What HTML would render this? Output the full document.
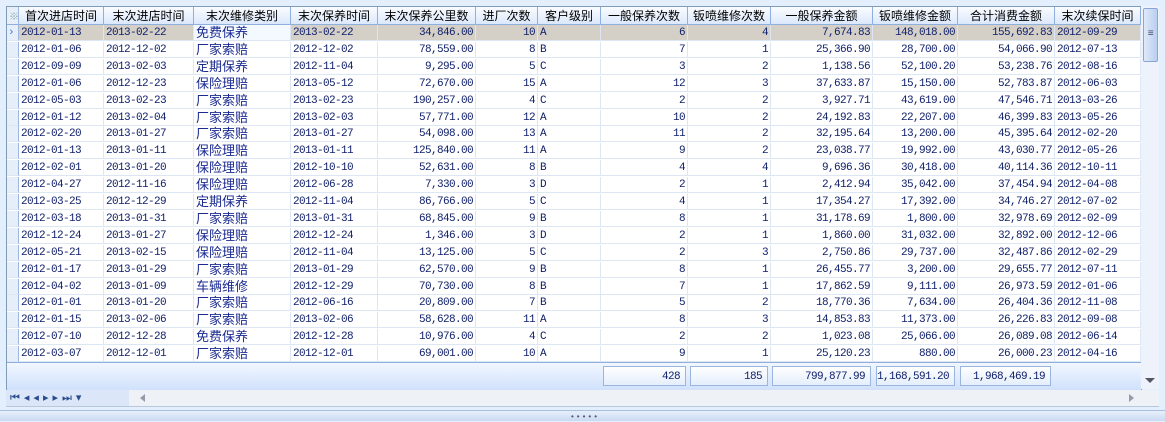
<!DOCTYPE html><html><head><meta charset="utf-8"><style>
body{margin:0;width:1165px;height:420px;background:#e3effc;position:relative;overflow:hidden;font-family:"Liberation Mono","Noto Sans CJK SC",monospace;font-size:11px;letter-spacing:-0.6px;color:#10206a}
#g{position:absolute;left:6px;top:6px;width:1134px;height:383px;background:#fff;border:1px solid #7f9db9;overflow:hidden}
.r{position:absolute;left:0;height:17px;width:1134px}
.c{position:absolute;top:0;height:16px;line-height:17px;border-right:1px solid #dde6f3;border-bottom:1px solid #dde6f3;white-space:nowrap;overflow:hidden;box-sizing:border-box;padding:0 2px}
.h .c{background:linear-gradient(#fafcff,#dbe8fb);border-right:1px solid #8fb0dc;border-bottom:1px solid #8fb0dc;color:#000;text-align:center;font-family:"Liberation Sans","Noto Sans CJK SC",sans-serif;font-size:12px;letter-spacing:0;height:18px;line-height:18px}
.ind{background:#e6eefa!important;border-right:1px solid #9db8e0!important}
.cj{font-family:"Liberation Sans","Noto Sans CJK SC",sans-serif;font-size:13px;letter-spacing:0;color:#1a2a90;line-height:16px}
.sel .c{background:#d4d0c8}
#ft{position:absolute;left:0;top:355px;width:1134px;height:28px;background:linear-gradient(#f2f7ff,#cfe0fb);border-top:1px solid #8fb0dc}
.fb{position:absolute;top:3px;height:20px;line-height:20px;border:1px solid #9ab6de;background:linear-gradient(#fff,#e4eefc);text-align:right;padding-right:5px;box-sizing:border-box}
#sb{position:absolute;left:1141px;top:6px;width:18px;height:383px;background:#eef3fb}
#nav{position:absolute;left:6px;top:390px;width:1153px;height:16px;background:#eef2f7;border-bottom:1px solid #b8c8dc;letter-spacing:0}
</style></head><body>
<div id="g"></div>
<div id="sb"><div style="position:absolute;left:2px;top:2px;width:13px;height:52px;background:linear-gradient(90deg,#dfe9f9,#b9cff0);border:1px solid #8aa6d4;border-radius:2px;text-align:center;line-height:52px;font-size:10px;color:#446">≡</div><div style="position:absolute;left:4px;top:372px;border:5px solid transparent;border-top:5px solid #556"></div></div>
<div id="nav"><div style="position:absolute;left:0;top:0;width:119px;height:16px;background:#dbe7f8;color:#2a4c8c;font-size:11px;line-height:16px;letter-spacing:4px;padding-left:4px;font-family:'DejaVu Sans',sans-serif">⏮◂◂▸▸⏭▾</div><div style="position:absolute;left:130px;top:4px;border:4px solid transparent;border-right:5px solid #99a"></div><div style="position:absolute;left:1123px;top:4px;border:4px solid transparent;border-left:5px solid #99a"></div></div>
<div style="position:absolute;left:0;top:410px;width:1165px;height:10px;background:linear-gradient(#e7effb,#c9daf2);border-top:1px solid #a9bfdd;letter-spacing:0"><div style="position:absolute;left:570px;top:2px;font-size:8px;color:#557;letter-spacing:1px">•••••</div></div>
<script>
var W=[[0,12],[12,85],[97,90],[187,97],[284,87],[371,98],[469,62],[531,63],[594,87],[681,83],[764,102],[866,85],[951,97],[1048,86]];
var H=["","首次进店时间","末次进店时间","末次维修类别","末次保养时间","末次保养公里数","进厂次数","客户级别","一般保养次数","钣喷维修次数","一般保养金额","钣喷维修金额","合计消费金额","末次续保时间"];
var D=`2012-01-13|2013-02-22|免费保养|2013-02-22|34,846.00|10|A|6|4|7,674.83|148,018.00|155,692.83|2012-09-29
2012-01-06|2012-12-02|厂家索赔|2012-12-02|78,559.00|8|B|7|1|25,366.90|28,700.00|54,066.90|2012-07-13
2012-09-09|2013-02-03|定期保养|2012-11-04|9,295.00|5|C|3|2|1,138.56|52,100.20|53,238.76|2012-08-16
2012-01-06|2012-12-23|保险理赔|2013-05-12|72,670.00|15|A|12|3|37,633.87|15,150.00|52,783.87|2012-06-03
2012-05-03|2013-02-23|厂家索赔|2013-02-23|190,257.00|4|C|2|2|3,927.71|43,619.00|47,546.71|2013-03-26
2012-01-12|2013-02-04|厂家索赔|2013-02-03|57,771.00|12|A|10|2|24,192.83|22,207.00|46,399.83|2013-05-26
2012-02-20|2013-01-27|厂家索赔|2013-01-27|54,098.00|13|A|11|2|32,195.64|13,200.00|45,395.64|2012-02-20
2012-01-13|2013-01-11|保险理赔|2013-01-11|125,840.00|11|A|9|2|23,038.77|19,992.00|43,030.77|2012-05-26
2012-02-01|2013-01-20|保险理赔|2012-10-10|52,631.00|8|B|4|4|9,696.36|30,418.00|40,114.36|2012-10-11
2012-04-27|2012-11-16|保险理赔|2012-06-28|7,330.00|3|D|2|1|2,412.94|35,042.00|37,454.94|2012-04-08
2012-03-25|2012-12-29|定期保养|2012-11-04|86,766.00|5|C|4|1|17,354.27|17,392.00|34,746.27|2012-07-02
2012-03-18|2013-01-31|厂家索赔|2013-01-31|68,845.00|9|B|8|1|31,178.69|1,800.00|32,978.69|2012-02-09
2012-12-24|2013-01-27|保险理赔|2012-12-24|1,346.00|3|D|2|1|1,860.00|31,032.00|32,892.00|2012-12-06
2012-05-21|2013-02-15|保险理赔|2012-11-04|13,125.00|5|C|2|3|2,750.86|29,737.00|32,487.86|2012-02-29
2012-01-17|2013-01-29|厂家索赔|2013-01-29|62,570.00|9|B|8|1|26,455.77|3,200.00|29,655.77|2012-07-11
2012-04-02|2013-01-09|车辆维修|2012-12-29|70,730.00|8|B|7|1|17,862.59|9,111.00|26,973.59|2012-01-06
2012-01-01|2013-01-20|厂家索赔|2012-06-16|20,809.00|7|B|5|2|18,770.36|7,634.00|26,404.36|2012-11-08
2012-01-15|2013-02-06|厂家索赔|2013-02-06|58,628.00|11|A|8|3|14,853.83|11,373.00|26,226.83|2012-09-08
2012-07-10|2012-12-28|免费保养|2012-12-28|10,976.00|4|C|2|2|1,023.08|25,066.00|26,089.08|2012-06-14
2012-03-07|2012-12-01|厂家索赔|2012-12-01|69,001.00|10|A|9|1|25,120.23|880.00|26,000.23|2012-04-16`.split("\n");
var R=[0,0,0,0,1,1,0,1,1,1,1,1,0];
var g=document.getElementById("g"),s='<div class="r h" style="top:0">';
H.forEach(function(t,i){s+='<div class="c'+(i?'':' ind')+'" style="left:'+W[i][0]+'px;width:'+W[i][1]+'px">'+(i?t:'<span style="color:#8aa;font-size:10px">※</span>')+'</div>'});
s+='</div>';
D.forEach(function(l,j){var f=l.split("|");s+='<div class="r'+(j==0?' sel':'')+'" style="top:'+(18+j*16.9)+'px">';
s+='<div class="c ind" style="left:0;width:12px;color:#3a7be0;font-size:11px;padding:0 1px">'+(j==0?'›':'')+'</div>';
f.forEach(function(t,i){var cls="c"+(i==2?" cj":"");var st='left:'+W[i+1][0]+'px;width:'+W[i+1][1]+'px;text-align:'+(R[i]?'right':'left');if(j==0&&i==2)st+=';background:#f4f8ff';s+='<div class="'+cls+'" style="'+st+'">'+t+'</div>'});s+='</div>'});
s+='<div id="ft">';
[[596,83,"428"],[683,78,"185"],[765,99,"799,877.99"],[869,79,"1,168,591.20"],[953,91,"1,968,469.19"]].forEach(function(b){s+='<div class="fb" style="left:'+b[0]+'px;width:'+b[1]+'px">'+b[2]+'</div>'});
s+='</div>';g.innerHTML=s;
</script>
</body></html>
